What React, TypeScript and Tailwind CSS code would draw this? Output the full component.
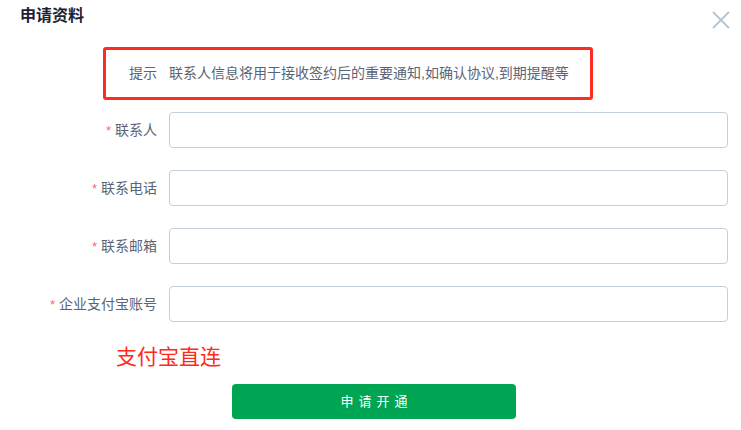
import React from "react";

const font = { fontFamily: '"Liberation Sans", "Noto Sans CJK SC", sans-serif' };

function Row({ label }: { label: string }) {
  return (
    <div className="flex items-center h-[36px]">
      <div className="w-[157px] shrink-0 text-right text-[14px] text-[#5a6474] pr-0">
        <span className="text-[#f56c6c] mr-[4px] text-[13px]">*</span>
        {label}
      </div>
      <div className="ml-[12px] w-[559px] h-[36px] border border-[#c3cedb] rounded-[4px] bg-white" />
    </div>
  );
}

export default function App() {
  return (
    <div className="w-[741px] h-[430px] bg-white relative overflow-hidden" style={font}>
      <div className="pl-[20px] pt-[5px] h-[47px]">
        <div className="text-[16px] leading-[22px] font-bold text-[#1f2233]">申请资料</div>
      </div>
      <button className="absolute left-[712px] top-[11px] w-[18px] h-[18px]">
        <svg viewBox="0 0 18 18" width="18" height="18">
          <path d="M1 1 L17 17 M17 1 L1 17" stroke="#b4c4d6" strokeWidth="1.8" />
        </svg>
      </button>
      <div className="ml-[103px] w-[490px] h-[53px] border-[3px] border-[#ff2a22] rounded-[3px] flex items-center pl-[23px] text-[14px] text-[#5a6474]">
        <span>提示</span>
        <span className="ml-[12px]">联系人信息将用于接收签约后的重要通知,如确认协议,到期提醒等</span>
      </div>
      <div className="mt-[12px] flex flex-col gap-[22px]">
        <Row label="联系人" />
        <Row label="联系电话" />
        <Row label="联系邮箱" />
        <Row label="企业支付宝账号" />
      </div>
      <div className="ml-[116px] mt-[22px] text-[21px] leading-[26px] text-[#ff2a1a]">支付宝直连</div>
      <div className="ml-[232px] mt-[14px] w-[284px] h-[35px] bg-[#00a553] rounded-[4px] flex items-center justify-center text-white text-[13px] tracking-[5px]">
        <span className="ml-[5px]">申请开通</span>
      </div>
    </div>
  );
}
